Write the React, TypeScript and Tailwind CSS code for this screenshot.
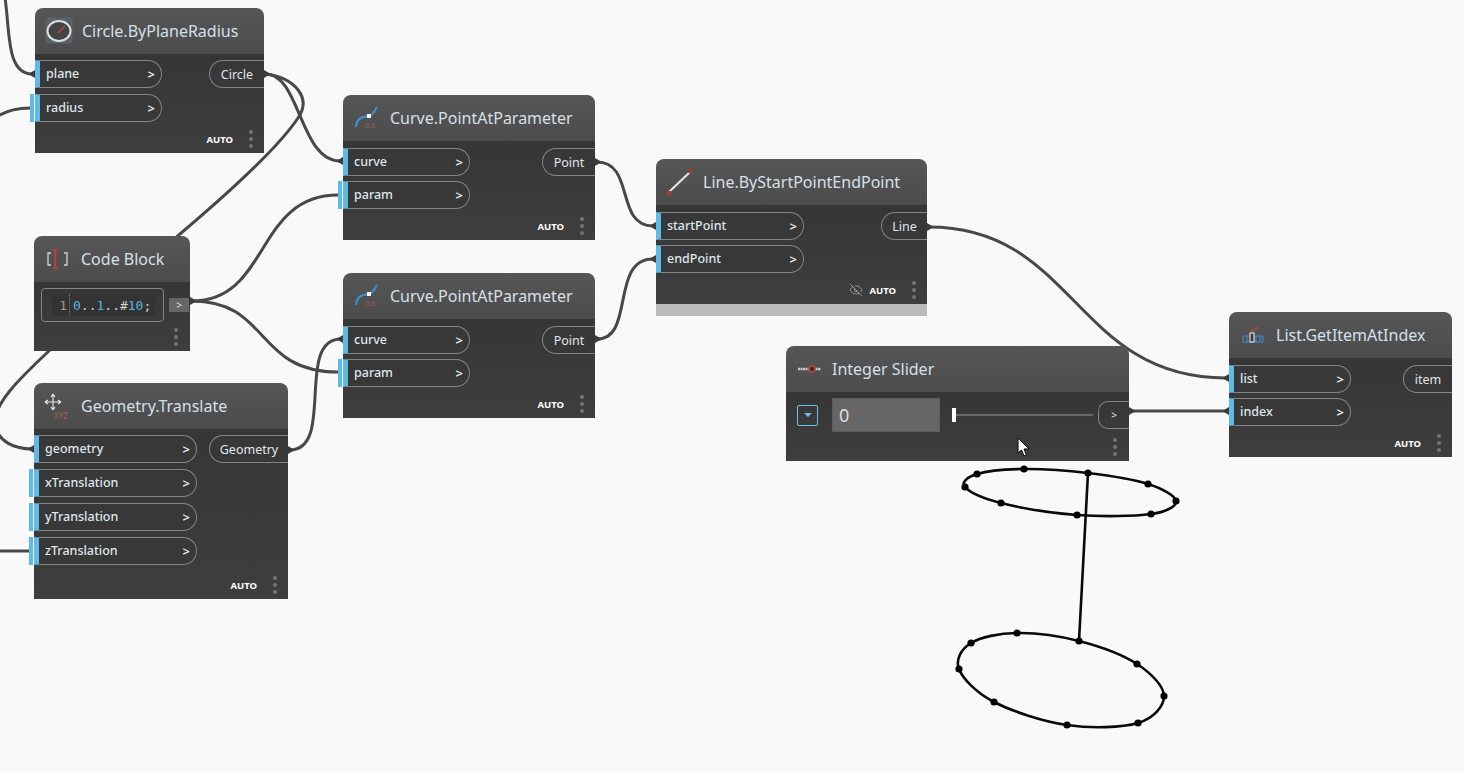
import React from "react";
import { EyeOff } from "lucide-react";

const wires = [
  "M5 -2 C10 30 6 74 32 74",
  "M-2 116 C8 110 18 108 30 108",
  "M266 74 C300 74 300 161 340 161",
  "M266 74 C295 78 312 98 298 118 C280 145 232 190 180 234 L50 350 C20 378 -8 405 -5 425 C-2 442 15 449 32 449",
  "M192 301 C270 301 255 195 338 195",
  "M192 301 C270 301 255 372 338 372",
  "M290 450 C335 450 295 339 341 339",
  "M597 162 C635 162 615 226 653 226",
  "M597 339 C635 339 610 259 653 259",
  "M929 227 C1075 227 1075 378 1226 378",
  "M1130 411 L1226 411",
  "M-2 551 L30 551",
];

// wedge nubs: [x at node edge, y, direction away from the node]
const nubs: [number, number, number][] = [
  [35, 74, -1], [264, 74, 1], [34, 449, -1], [190, 301, 1], [343, 161, -1], [343, 339, -1],
  [288, 450, 1], [595, 162, 1], [595, 339, 1], [656, 226, -1], [656, 259, -1], [927, 227, 1], [1129, 411, 1], [1229, 378, -1], [1229, 411, -1],
];

const ring1: [number, number][] = [
  [977, 474], [1024, 469], [1088, 473], [1148, 484], [1176, 501], [1151, 514], [1077, 515], [1001, 503], [965, 487],
];
const ring2: [number, number][] = [
  [1017, 633], [1079, 641], [1137, 664], [1164, 696], [1138, 723], [1067, 725], [994, 702], [959, 669], [971, 643],
];

function smooth(p: [number, number][]) {
  const n = p.length;
  let d = `M${p[0][0]} ${p[0][1]}`;
  for (let i = 0; i < n; i++) {
    const a = p[(i - 1 + n) % n];
    const b = p[i];
    const c = p[(i + 1) % n];
    const e = p[(i + 2) % n];
    d += ` C${b[0] + (c[0] - a[0]) / 6} ${b[1] + (c[1] - a[1]) / 6} ${c[0] - (e[0] - b[0]) / 6} ${c[1] - (e[1] - b[1]) / 6} ${c[0]} ${c[1]}`;
  }
  return d + "Z";
}

type InputPort = { label: string; width: string; extra?: boolean };

function Dots() {
  return (
    <div className="flex flex-col gap-[3px]">
      <span className="w-[4px] h-[4px] rounded-full bg-[#747474]" />
      <span className="w-[4px] h-[4px] rounded-full bg-[#747474]" />
      <span className="w-[4px] h-[4px] rounded-full bg-[#747474]" />
    </div>
  );
}

function Header({ icon, title, gap }: { icon: React.ReactNode; title: string; gap: string }) {
  return (
    <div className={`h-[46px] shrink-0 rounded-t-[8px] bg-linear-to-b from-[#565656] to-[#4c4c4c] flex items-center pl-[10px] ${gap}`}>
      <div className="w-[28px] h-[28px] shrink-0">{icon}</div>
      <span className="text-[16px] leading-none text-[#d5e0e8] whitespace-nowrap">{title}</span>
    </div>
  );
}

function In({ label, width, extra }: InputPort) {
  return (
    <div className={`relative h-[28px] flex items-center justify-between rounded-r-[14px] border border-[#858585] border-l-[5px] border-l-[#5fbbe6] bg-[#383838] pl-[6px] pr-[6px] ${width}`}>
      {extra && <span className="absolute left-[-10px] top-[-1px] w-[4px] h-[28px] bg-[#5fbbe6]" />}
      <span className="text-[12.5px] font-medium text-[#dfe6ea] leading-none mt-[1px]">{label}</span>
      <span className="text-[13px] font-semibold text-[#e8e8e8] leading-none mt-[1px]">&gt;</span>
    </div>
  );
}

function Out({ label, width }: { label: string; width: string }) {
  return (
    <div className={`h-[28px] flex items-center justify-center rounded-l-[14px] border border-r-0 border-[#858585] bg-[#383838] ${width}`}>
      <span className="text-[12.5px] text-[#e2e6e8] leading-none mt-[2px]">{label}</span>
    </div>
  );
}

function Footer({ freeze }: { freeze?: boolean }) {
  return (
    <div className="mt-auto h-[28px] shrink-0 flex items-center justify-end pr-[11px]">
      {freeze && <EyeOff size={14} strokeWidth={1.2} className="text-[#b8b8b8] mr-[6px]" />}
      <span className="text-[9.5px] font-bold text-white leading-none mr-[16px] mt-[1px]">AUTO</span>
      <Dots />
    </div>
  );
}

function Node({
  pos, icon, title, inputs, output, outW, compact, freeze, gap = "gap-[9px]",
}: {
  pos: string; icon: React.ReactNode; title: string; inputs: InputPort[]; output: string; outW: string; compact?: boolean; freeze?: boolean; gap?: string;
}) {
  return (
    <div className={`absolute flex flex-col ${pos}`}>
      <Header icon={icon} title={title} gap={gap} />
      <div className={`flex-1 flex flex-col bg-linear-to-b from-[#363636] to-[#3e3e3e] ${compact ? "pt-[7px]" : "pt-[6px]"}`}>
        <div className="flex justify-between items-start">
          <div className={`flex flex-col ${compact ? "gap-[5px]" : "gap-[6px]"}`}>
            {inputs.map((p) => <In key={p.label} {...p} />)}
          </div>
          <Out label={output} width={outW} />
        </div>
        <Footer freeze={freeze} />
      </div>
    </div>
  );
}

const CircleIcon = (
  <svg viewBox="0 0 28 28" className="w-full h-full">
    <rect x="1" y="1" width="26" height="25" rx="2" fill="#56626c" stroke="#5f7182" strokeDasharray="1 1" />
    <ellipse cx="14" cy="14" rx="11.5" ry="10" fill="#444444" stroke="#dedede" strokeWidth="2" />
    <path d="M13 16 L20 9" stroke="#b5483f" strokeWidth="1.5" />
  </svg>
);
const CurveIcon = (
  <svg viewBox="0 0 28 28" className="w-full h-full">
    <path d="M3 23 C4 12 12 13 16 12 C20 11 22 7 24 3" fill="none" stroke="#3f8fd0" strokeWidth="2.2" />
    <rect x="14" y="10" width="4" height="4" fill="#fff" />
    <text x="12" y="24" fontSize="7.5" fill="#9a6058" fontFamily="Noto Sans, sans-serif">0.6</text>
  </svg>
);
const CodeIcon = (
  <svg viewBox="0 0 28 28" className="w-full h-full">
    <path d="M7 8 H4 V20 H7 M20 8 H23 V20 H20" fill="none" stroke="#d4d4d4" strokeWidth="1.3" />
    <path d="M9 5 H13.5 M9 23 H13.5 M11.25 5 V23" fill="none" stroke="#b8403a" strokeWidth="2" />
  </svg>
);
const MoveIcon = (
  <svg viewBox="0 0 28 28" className="w-full h-full">
    <path d="M9 2 V18 M1 10 H17 M9 2 L7 5 M9 2 L11 5 M9 18 L7 15 M9 18 L11 15 M1 10 L4 8 M1 10 L4 12 M17 10 L14 8 M17 10 L14 12" fill="none" stroke="#e8e8e8" strokeWidth="1.1" />
    <text x="10" y="27" fontSize="8" fill="#9a6058" fontFamily="Noto Sans, sans-serif">XYZ</text>
  </svg>
);
const LineIcon = (
  <svg viewBox="0 0 28 28" className="w-full h-full">
    <path d="M3 24 L24 4" stroke="#e8e8e8" strokeWidth="2" />
    <rect x="22" y="1" width="4" height="4" fill="#a83a34" />
    <rect x="1" y="23" width="4" height="4" fill="#a83a34" />
  </svg>
);
const ListIcon = (
  <svg viewBox="0 0 28 28" className="w-full h-full">
    <path d="M4 15 H24 V21 H4 Z M8 15 V21 M12 15 V21 M17 15 V21 M21 15 V21" fill="none" stroke="#3f8fd0" strokeWidth="1" />
    <rect x="11" y="12" width="4" height="9" fill="#3c3c3c" stroke="#e8e8e8" strokeWidth="1.1" />
    <path d="M11 8 L13.5 10 L19 6" fill="none" stroke="#b5483f" strokeWidth="1.3" />
  </svg>
);
const SliderIcon = (
  <svg viewBox="0 0 28 28" className="w-full h-full">
    <path d="M2 14 H25" stroke="#c8c8c8" strokeWidth="2.4" strokeDasharray="2 0.5" />
    <circle cx="16" cy="14" r="3" fill="#3a2a28" stroke="#b5483f" strokeWidth="1.6" />
  </svg>
);

function CodeBlock() {
  return (
    <div className="absolute left-[34px] top-[236px] w-[156px] h-[114px] flex flex-col">
      <Header icon={CodeIcon} title="Code Block" gap="gap-[9px]" />
      <div className="flex-1 flex flex-col bg-linear-to-b from-[#363636] to-[#3e3e3e] pt-[6px]">
        <div className="flex items-center">
          <div className="ml-[7px] w-[123px] h-[34px] rounded-[4px] border border-[#858585] flex items-center pl-[10px]">
            <div className="flex items-center h-[22px] bg-[#333333] font-['DejaVu_Sans_Mono',monospace] text-[13px] leading-none pl-[4px] pr-[4px]">
              <span className="text-[#a89a84] w-[14px] text-right pr-[2px] border-r border-dotted border-[#777] h-[22px] flex items-center justify-end">1</span>
              <span className="ml-[3px] text-[#58b4e4]">0</span>
              <span className="text-[#d4d4d4]">..</span>
              <span className="text-[#58b4e4]">1</span>
              <span className="text-[#d4d4d4]">..#</span>
              <span className="text-[#58b4e4]">10</span>
              <span className="text-[#d4d4d4]">;</span>
            </div>
          </div>
          <div className="ml-[5px] w-[20px] h-[14px] bg-[#666666] flex items-center justify-center text-[10px] text-[#e4e4e4] leading-none">&gt;</div>
        </div>
        <div className="mt-auto h-[29px] flex items-center justify-end pr-[12px]"><Dots /></div>
      </div>
    </div>
  );
}

function SliderNode() {
  return (
    <div className="absolute left-[786px] top-[346px] w-[343px] h-[115px] flex flex-col">
      <Header icon={SliderIcon} title="Integer Slider" gap="gap-[8px]" />
      <div className="flex-1 flex flex-col bg-linear-to-b from-[#363636] to-[#3e3e3e] pt-[6px]">
        <div className="flex items-center">
          <div className="ml-[11px] w-[21px] h-[21px] rounded-[2px] border-[1.5px] border-[#6cc0ec] flex items-center justify-center">
            <span className="w-0 h-0 border-x-[4px] border-x-transparent border-t-[4px] border-t-[#6cc0ec]" />
          </div>
          <div className="ml-[14px] w-[108px] h-[34px] bg-[#666666] border border-[#5c5c5c] flex items-center pl-[6px] text-[18px] text-[#dddddd] leading-none">0</div>
          <div className="ml-[12px] w-[4px] h-[14px] bg-white" />
          <div className="w-[137px] h-[2px] bg-[#686868]" />
          <div className="ml-[5px] w-[31px] h-[28px] rounded-l-[10px] border border-r-0 border-[#858585] flex items-center justify-center text-[10px] text-[#e4e4e4] leading-none">&gt;</div>
        </div>
        <div className="mt-auto h-[28px] flex items-center justify-end pr-[12px]"><Dots /></div>
      </div>
    </div>
  );
}

export default function App() {
  return (
    <div className="relative w-[1464px] h-[772px] overflow-hidden bg-[#f9f9f9] font-['Noto_Sans',sans-serif]">
      <svg className="absolute inset-0" width="1464" height="772">
        {wires.map((d) => <path key={d} d={d} fill="none" stroke="#484848" strokeWidth="3" />)}
        {nubs.map(([x, y, s]) => (
          <path key={`${x}-${y}`} d={`M${x} ${y - 4} L${x + s * 5} ${y - 1} V${y + 1} L${x} ${y + 4} Z`} fill="#3c3c3c" />
        ))}
      </svg>

      <Node pos="left-[35px] top-[8px] w-[229px] h-[145px]" icon={CircleIcon} title="Circle.ByPlaneRadius" output="Circle" outW="w-[55px]"
        inputs={[{ label: "plane", width: "w-[127px]" }, { label: "radius", width: "w-[127px]", extra: true }]} />
      <Node pos="left-[343px] top-[95px] w-[252px] h-[145px]" icon={CurveIcon} title="Curve.PointAtParameter" output="Point" outW="w-[53px]" compact
        inputs={[{ label: "curve", width: "w-[127px]" }, { label: "param", width: "w-[127px]", extra: true }]} />
      <Node pos="left-[343px] top-[273px] w-[252px] h-[145px]" icon={CurveIcon} title="Curve.PointAtParameter" output="Point" outW="w-[53px]" compact
        inputs={[{ label: "curve", width: "w-[127px]" }, { label: "param", width: "w-[127px]", extra: true }]} />
      <div className="absolute left-[656px] top-[304px] w-[271px] h-[12px] bg-[#bbbbbb]" />
      <Node pos="left-[656px] top-[159px] w-[271px] h-[145px]" icon={LineIcon} title="Line.ByStartPointEndPoint" output="Line" outW="w-[46px]" compact freeze
        inputs={[{ label: "startPoint", width: "w-[148px]" }, { label: "endPoint", width: "w-[148px]" }]} />
      <Node pos="left-[1229px] top-[312px] w-[223px] h-[145px]" icon={ListIcon} title="List.GetItemAtIndex" output="item" outW="w-[49px]" compact
        inputs={[{ label: "list", width: "w-[122px]" }, { label: "index", width: "w-[122px]" }]} />
      <Node pos="left-[34px] top-[383px] w-[254px] h-[216px]" icon={MoveIcon} title="Geometry.Translate" output="Geometry" outW="w-[79px]"
        inputs={[
          { label: "geometry", width: "w-[163px]" },
          { label: "xTranslation", width: "w-[163px]", extra: true },
          { label: "yTranslation", width: "w-[163px]", extra: true },
          { label: "zTranslation", width: "w-[163px]", extra: true },
        ]} />
      <CodeBlock />
      <SliderNode />

      <svg className="absolute inset-0 pointer-events-none" width="1464" height="772">
        <path d={smooth(ring1)} fill="none" stroke="#0a0a0a" strokeWidth="2.6" />
        <path d={smooth(ring2)} fill="none" stroke="#0a0a0a" strokeWidth="2.6" />
        <path d="M1088 473 L1079 641" stroke="#0a0a0a" strokeWidth="2.6" />
        {[...ring1, ...ring2].map(([x, y]) => <circle key={`${x}-${y}`} cx={x} cy={y} r="3.6" fill="#000" />)}
        <path d="M1018 438 V453 L1021.5 450 L1024 456 L1026.5 455 L1024 449 L1029 449 Z" fill="#fff" stroke="#000" strokeWidth="1" />
      </svg>
    </div>
  );
}
